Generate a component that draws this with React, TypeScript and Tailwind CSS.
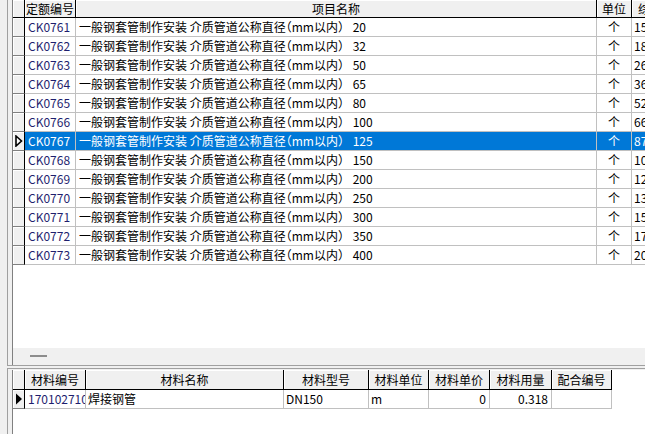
import React from 'react';

interface QuotaRow {
  code: string;
  size: string;
  price: string;
}

const rows: QuotaRow[] = [
  { code: 'CK0761', size: '20', price: '158.63' },
  { code: 'CK0762', size: '32', price: '183.52' },
  { code: 'CK0763', size: '50', price: '262.17' },
  { code: 'CK0764', size: '65', price: '365.40' },
  { code: 'CK0765', size: '80', price: '521.88' },
  { code: 'CK0766', size: '100', price: '664.09' },
  { code: 'CK0767', size: '125', price: '873.25' },
  { code: 'CK0768', size: '150', price: '1025.71' },
  { code: 'CK0769', size: '200', price: '1231.46' },
  { code: 'CK0770', size: '250', price: '1367.80' },
  { code: 'CK0771', size: '300', price: '1529.34' },
  { code: 'CK0772', size: '350', price: '1746.12' },
  { code: 'CK0773', size: '400', price: '2018.95' },
];

const SELECTED = 'CK0767';

const headCell =
  'shrink-0 h-full flex items-center justify-center border-r border-black bg-[#f0f0f0] shadow-[inset_1px_1px_0_#fff] overflow-hidden whitespace-nowrap';

const OutlineArrow = () => (
  <svg width="8" height="12" viewBox="0 0 8 12">
    <path d="M1 1 L6.5 6 L1 11 Z" fill="#fff" stroke="#000" strokeWidth="1.6" strokeLinejoin="miter" />
  </svg>
);

const SolidArrow = () => (
  <svg width="8" height="12" viewBox="0 0 8 12">
    <path d="M1 0.5 L7 6 L1 11.5 Z" fill="#000" />
  </svg>
);

const App: React.FC = () => {
  return (
    <div className="w-[645px] h-[434px] overflow-hidden bg-[#f0f0f0] flex flex-col font-['Noto_Sans_CJK_SC','Microsoft_YaHei',sans-serif] text-[12px] text-black">
      {/* Top panel: quota list */}
      <div className="flex h-[366px] shrink-0">
        <div className="w-[7px] shrink-0" />
        <div className="flex-1 min-w-0 flex border-l border-b border-[#a0a0a0] pl-[4px]">
          <div className="flex-1 min-w-0 flex flex-col border-l border-[#808080] bg-white overflow-hidden">
            <div className="flex-1">
              {/* header */}
              <div className="flex h-[18px] border-b border-black">
                <div className={`${headCell} w-[12px]`} />
                <div className={`${headCell} w-[51px]`}>定额编号</div>
                <div className={`${headCell} w-[521px]`}>项目名称</div>
                <div className={`${headCell} w-[35px]`}>单位</div>
                <div className={`${headCell} w-[60px] border-r-0`}>综合单价</div>
              </div>
              {/* rows */}
              {rows.map((r) => {
                const sel = r.code === SELECTED;
                return (
                  <div key={r.code} className={`flex h-[19px] ${sel ? 'bg-[#0078d7] text-white' : ''}`}>
                    <div className="shrink-0 w-[12px] h-full flex items-center justify-center bg-[#f0f0f0] border-r border-b border-r-black border-b-[#808080] shadow-[inset_1px_1px_0_#fff]">
                      {sel && <OutlineArrow />}
                    </div>
                    <div className={`shrink-0 w-[51px] h-full flex items-center pl-[3px] border-r border-b border-[#c0c0c0] whitespace-nowrap ${sel ? '' : 'text-[#1e1e6e]'}`}>
                      {r.code}
                    </div>
                    <div className="shrink-0 w-[521px] h-full flex items-center pl-[3px] border-r border-b border-[#c0c0c0] whitespace-pre overflow-hidden">
                      <span>{'一般钢套管制作安装 介质管道公称直径'}</span>
                      <span className="[font-feature-settings:'halt']">（</span>
                      <span>{`mm以内） ${r.size}`}</span>
                    </div>
                    <div className="shrink-0 w-[35px] h-full flex items-center justify-center border-r border-b border-[#c0c0c0]">
                      个
                    </div>
                    <div className="shrink-0 w-[60px] h-full flex items-center pl-[2px] border-b border-[#c0c0c0] whitespace-nowrap overflow-hidden">
                      {r.price}
                    </div>
                  </div>
                );
              })}
            </div>
            {/* splitter band */}
            <div className="h-[17px] shrink-0 bg-[#f0f0f0] flex items-start pl-[17px] pt-[7px]">
              <div className="w-[17px] h-[2px] bg-[#8c8c8c]" />
            </div>
          </div>
        </div>
      </div>

      <div className="h-[2px] shrink-0" />

      {/* Bottom panel: materials */}
      <div className="flex flex-1 min-h-0">
        <div className="w-[7px] shrink-0" />
        <div className="flex-1 min-w-0 flex border-l border-t border-[#a0a0a0] pl-[4px] pt-[1px]">
          <div className="flex-1 min-w-0 border-l border-[#808080] bg-white overflow-hidden">
            <div className="flex h-[20px] w-[599px] border-b border-black">
              <div className={`${headCell} w-[12px]`} />
              <div className={`${headCell} w-[61px]`}>材料编号</div>
              <div className={`${headCell} w-[198px]`}>材料名称</div>
              <div className={`${headCell} w-[85px]`}>材料型号</div>
              <div className={`${headCell} w-[60px]`}>材料单位</div>
              <div className={`${headCell} w-[61px]`}>材料单价</div>
              <div className={`${headCell} w-[62px]`}>材料用量</div>
              <div className={`${headCell} w-[60px]`}>配合编号</div>
            </div>
            <div className="flex h-[19px] w-[599px]">
              <div className="shrink-0 w-[12px] h-full flex items-center justify-center bg-[#f0f0f0] border-r border-b border-r-black border-b-[#808080] shadow-[inset_1px_1px_0_#fff]">
                <SolidArrow />
              </div>
              <div className="shrink-0 w-[61px] h-full flex items-center pl-[3px] border-r border-b border-[#c0c0c0] whitespace-nowrap overflow-hidden text-[#1e1e6e]">
                170102710
              </div>
              <div className="shrink-0 w-[198px] h-full flex items-center pl-[2px] border-r border-b border-[#c0c0c0]">
                焊接钢管
              </div>
              <div className="shrink-0 w-[85px] h-full flex items-center pl-[2px] border-r border-b border-[#c0c0c0]">
                DN150
              </div>
              <div className="shrink-0 w-[60px] h-full flex items-center pl-[2px] border-r border-b border-[#c0c0c0]">
                m
              </div>
              <div className="shrink-0 w-[61px] h-full flex items-center justify-end pr-[3px] border-r border-b border-[#c0c0c0]">
                0
              </div>
              <div className="shrink-0 w-[62px] h-full flex items-center justify-end pr-[3px] border-r border-b border-[#c0c0c0]">
                0.318
              </div>
              <div className="shrink-0 w-[60px] h-full border-r border-b border-[#c0c0c0]" />
            </div>
          </div>
        </div>
      </div>
    </div>
  );
};

export default App;
